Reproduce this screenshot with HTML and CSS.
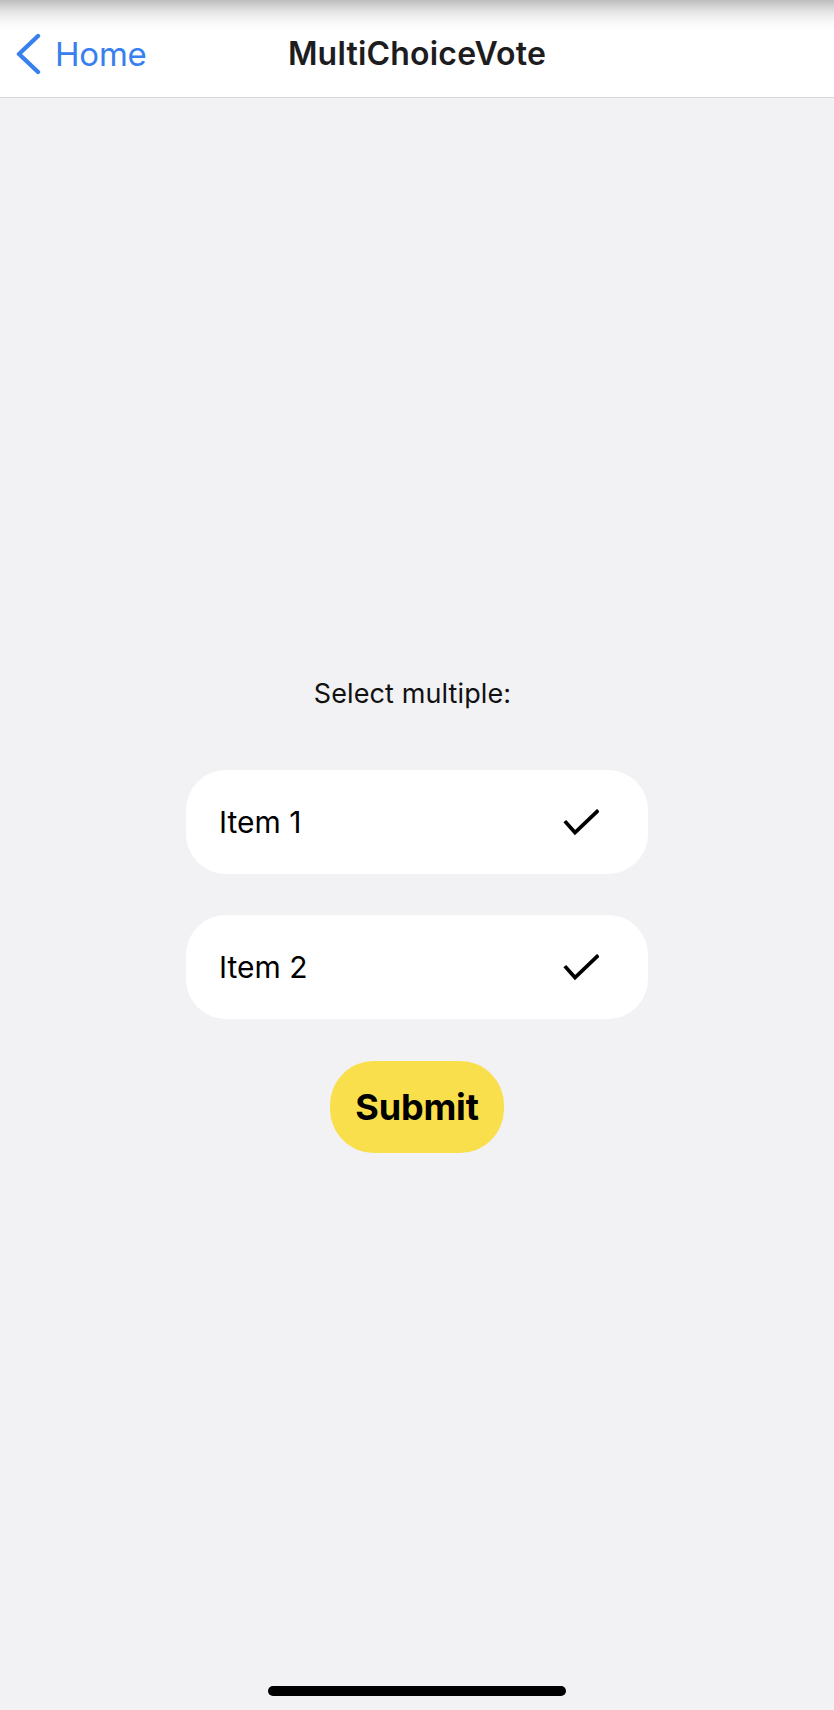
FILE: index.html
```html
<!DOCTYPE html>
<html>
<head>
<meta charset="utf-8">
<link rel="stylesheet" href="styles.css">
</head>
<body>
<div class="screen">
  <header class="navbar">
    <div class="nav-left">
      <svg class="chevron" width="28" height="42" viewBox="0 0 28 42"><path d="M24 3 L5 21 L24 39" fill="none" stroke="#3880ee" stroke-width="4.4" stroke-linecap="round" stroke-linejoin="round"/></svg>
      <span class="back-label">Home</span>
    </div>
    <div class="nav-title">MultiChoiceVote</div>
    <div class="nav-right"></div>
  </header>
  <main class="content">
    <p class="prompt">Select multiple:</p>
    <div class="options">
      <div class="option">
        <span class="option-label">Item 1</span>
        <svg class="check" width="36" height="28" viewBox="0 0 36 28"><path d="M3 13.5 L12 23.5 L34 2.5" fill="none" stroke="#000" stroke-width="3.7" stroke-linecap="square" stroke-linejoin="miter"/></svg>
      </div>
      <div class="option">
        <span class="option-label">Item 2</span>
        <svg class="check" width="36" height="28" viewBox="0 0 36 28"><path d="M3 13.5 L12 23.5 L34 2.5" fill="none" stroke="#000" stroke-width="3.7" stroke-linecap="square" stroke-linejoin="miter"/></svg>
      </div>
    </div>
    <button class="submit">Submit</button>
  </main>
  <div class="home-indicator"></div>
</div>
</body>
</html>
```

FILE: styles.css
```css
html, body {
  margin: 0;
  padding: 0;
}
body {
  background: #f2f1f4;
  font-family: Inter, "Liberation Sans", sans-serif;
}
.screen {
  width: 834px;
  height: 1710px;
  display: flex;
  flex-direction: column;
  overflow: hidden;
}
.navbar {
  height: 98px;
  border-bottom: 1px solid #d8d8dc;
  background: linear-gradient(to bottom, #bdbdbd 0px, #e6e6e6 12px, #f8f8f8 22px, #ffffff 30px);
  display: grid;
  grid-template-columns: 1fr auto 1fr;
  align-items: center;
  padding-top: 10px;
  box-sizing: border-box;
}
.nav-left {
  display: flex;
  align-items: center;
  padding-left: 14px;
  gap: 13px;
}
.chevron {
  display: block;
}
.back-label {
  color: #3880ee;
  font-size: 33px;
  font-weight: 400;
  letter-spacing: -0.2px;
}
.nav-title {
  font-size: 32px;
  font-weight: 600;
  color: #1d1d1f;
  letter-spacing: 0.2px;
}
.content {
  display: flex;
  flex-direction: column;
  align-items: center;
  padding-top: 580px;
}
.prompt {
  margin: 0;
  padding-right: 9px;
  font-size: 27px;
  line-height: 32px;
  color: #111;
  letter-spacing: 0.1px;
}
.options {
  display: flex;
  flex-direction: column;
  gap: 41px;
  margin-top: 60px;
}
.option {
  width: 462px;
  height: 104px;
  box-sizing: border-box;
  background: #fff;
  border-radius: 40px;
  display: flex;
  align-items: center;
  justify-content: space-between;
  padding: 0 49px 0 33px;
}
.option-label {
  font-size: 30px;
  color: #000;
}
.check {
  display: block;
  margin-top: 2px;
}
.submit {
  margin-top: 42px;
  width: 174px;
  height: 92px;
  border: none;
  border-radius: 44px;
  background: #f9df4b;
  font-family: Inter, "Liberation Sans", sans-serif;
  font-size: 36px;
  font-weight: 700;
  color: #000;
  padding: 0;
  letter-spacing: -0.2px;
}
.home-indicator {
  margin-top: auto;
  margin-bottom: 14px;
  align-self: center;
  width: 298px;
  height: 10px;
  border-radius: 5px;
  background: #000;
}
```
